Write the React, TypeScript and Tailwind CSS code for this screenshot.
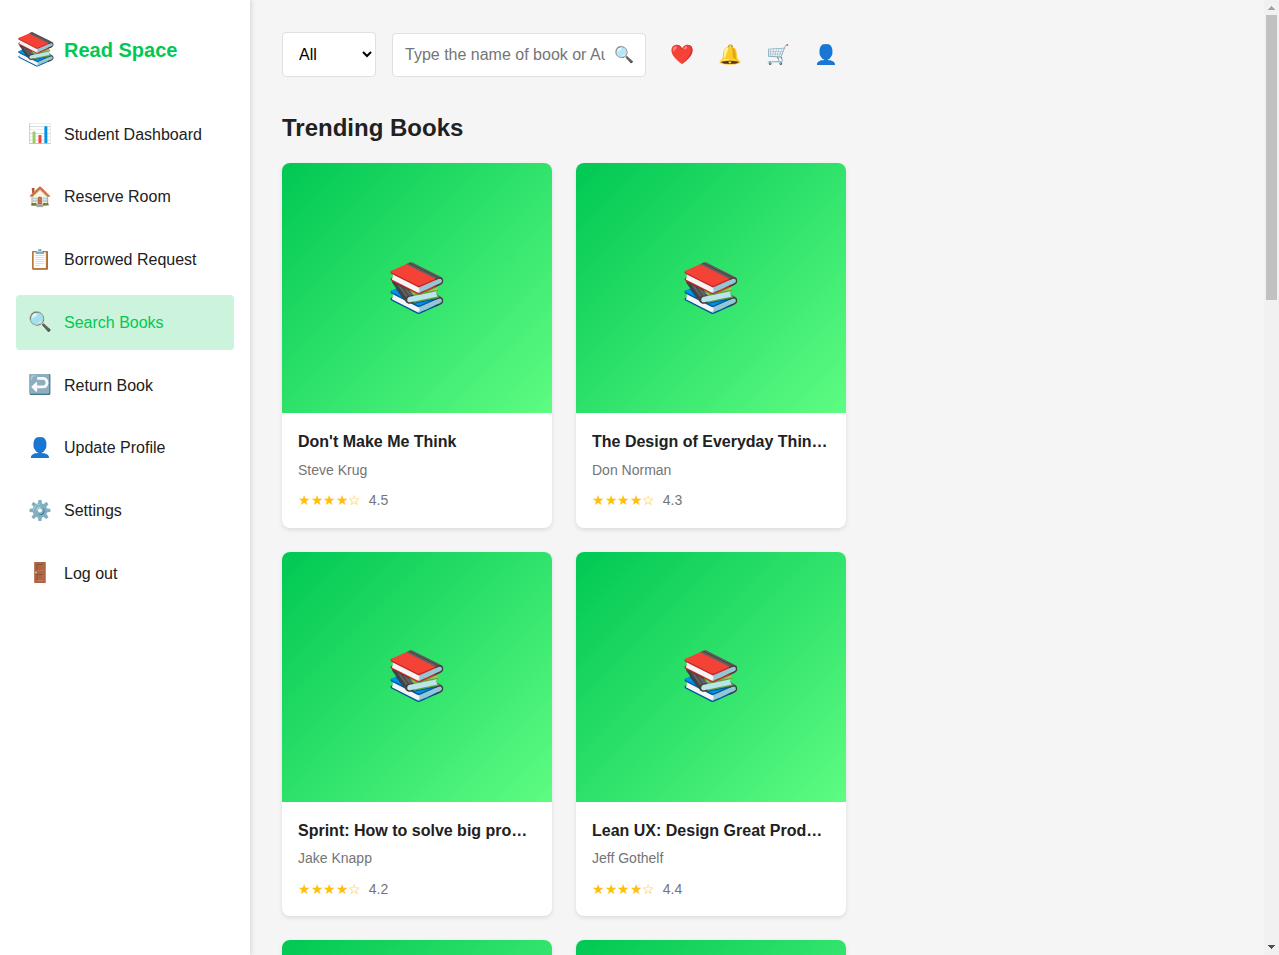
import React from "react";

type NavItem = { icon: string; label: string; active?: boolean };
type Book = { title: string; author: string; rating: string };

const navItems: NavItem[] = [
  { icon: "📊", label: "Student Dashboard" },
  { icon: "🏠", label: "Reserve Room" },
  { icon: "📋", label: "Borrowed Request" },
  { icon: "🔍", label: "Search Books", active: true },
  { icon: "↩️", label: "Return Book" },
  { icon: "👤", label: "Update Profile" },
  { icon: "⚙️", label: "Settings" },
  { icon: "🚪", label: "Log out" },
];

const books: Book[] = [
  { title: "Don't Make Me Think", author: "Steve Krug", rating: "4.5" },
  { title: "The Design of Everyday Things", author: "Don Norman", rating: "4.3" },
  { title: "Sprint: How to solve big problems", author: "Jake Knapp", rating: "4.2" },
  { title: "Lean UX: Design Great Products", author: "Jeff Gothelf", rating: "4.4" },
  { title: "The Road to React", author: "Robin Wieruch", rating: "4.1" },
  { title: "Rich Dad Poor Dad", author: "Robert Kiyosaki", rating: "4.6" },
];

function Sidebar() {
  return (
    <aside className="z-10 w-[250px] shrink-0 bg-white px-4 py-6 shadow-[2px_0_4px_rgba(0,0,0,0.1)]">
      <div className="mb-8 flex items-center gap-2">
        <span className="text-[32px] leading-[1.6]">📚</span>
        <span className="text-xl leading-[1.6] font-bold text-[#00c853]">Read Space</span>
      </div>
      <nav className="flex flex-col gap-2">
        {navItems.map((item) => (
          <a
            key={item.label}
            className={
              item.active
                ? "flex items-center gap-3 rounded bg-[#ccf4dd] p-3 text-[#00c853]"
                : "flex items-center gap-3 rounded p-3"
            }
          >
            <span className="w-6 text-center text-[19.2px] leading-[1.6]">{item.icon}</span>
            <span>{item.label}</span>
          </a>
        ))}
      </nav>
    </aside>
  );
}

function Header() {
  return (
    <header className="mb-8 flex items-center gap-4">
      <select className="h-[45px] w-[94px] rounded border border-[#e0e0e0] bg-white px-3 text-base text-black">
        <option>All</option>
      </select>
      <div className="flex h-11 w-[254px] items-center rounded border border-[#e0e0e0] bg-white pr-[11px] pl-3">
        <input
          placeholder="Type the name of book or Author"
          className="w-[200px] min-w-0 leading-normal outline-none placeholder:text-[#757575]"
        />
        <span className="ml-auto">🔍</span>
      </div>
      <div className="ml-2 flex gap-6 pt-0.5 text-[19.2px] leading-[1.6]">
        <span>❤️</span>
        <span>🔔</span>
        <span>🛒</span>
        <span>👤</span>
      </div>
    </header>
  );
}

function BookCard({ book }: { book: Book }) {
  return (
    <article className="overflow-hidden rounded-lg bg-white shadow-[0_2px_4px_rgba(0,0,0,0.1)]">
      <div className="flex h-[250px] items-center justify-center bg-[linear-gradient(135deg,#00c853,#5efc82)] text-5xl leading-[1.6]">
        📚
      </div>
      <div className="p-4">
        <h3 className="mb-1 truncate font-bold">{book.title}</h3>
        <p className="mb-2 text-sm leading-[1.6] text-[#757575]">{book.author}</p>
        <div className="flex items-center gap-2 text-sm leading-[1.6]">
          <span className="tracking-[-0.45px] text-[#ffc107]">★★★★☆</span>
          <span className="text-[#757575]">{book.rating}</span>
        </div>
      </div>
    </article>
  );
}

function Scrollbar() {
  return (
    <div className="flex w-[15px] shrink-0 flex-col items-center bg-[#f1f1f1]">
      <svg className="h-[15px] w-[15px] shrink-0" viewBox="0 0 15 15" shapeRendering="crispEdges">
        <path d="M7 6h1v1h1v1h1v1h1v1H4V9h1V8h1V7h1z" fill="#a3a3a3" />
      </svg>
      <div className="h-[285px] w-[11px] bg-[#c1c1c1]" />
      <svg className="mt-auto h-[15px] w-[15px] shrink-0" viewBox="0 0 15 15" shapeRendering="crispEdges">
        <path d="M4 5h7v1h-1v1H9v1H8v1H7V8H6V7H5V6H4z" fill="#505050" />
      </svg>
    </div>
  );
}

export default function App() {
  return (
    <div className="flex h-screen overflow-hidden bg-[#f5f5f5] font-['Liberation_Sans',sans-serif] text-base leading-[1.6] text-[#212121]">
      <Sidebar />
      <main className="min-w-0 flex-1 p-8">
        <Header />
        <section className="w-[564px]">
          <h2 className="mb-4 text-2xl leading-[1.6] font-bold">Trending Books</h2>
          <div className="grid grid-cols-[270px_270px] gap-6">
            {books.map((book) => (
              <BookCard key={book.title} book={book} />
            ))}
          </div>
        </section>
      </main>
      <Scrollbar />
    </div>
  );
}
